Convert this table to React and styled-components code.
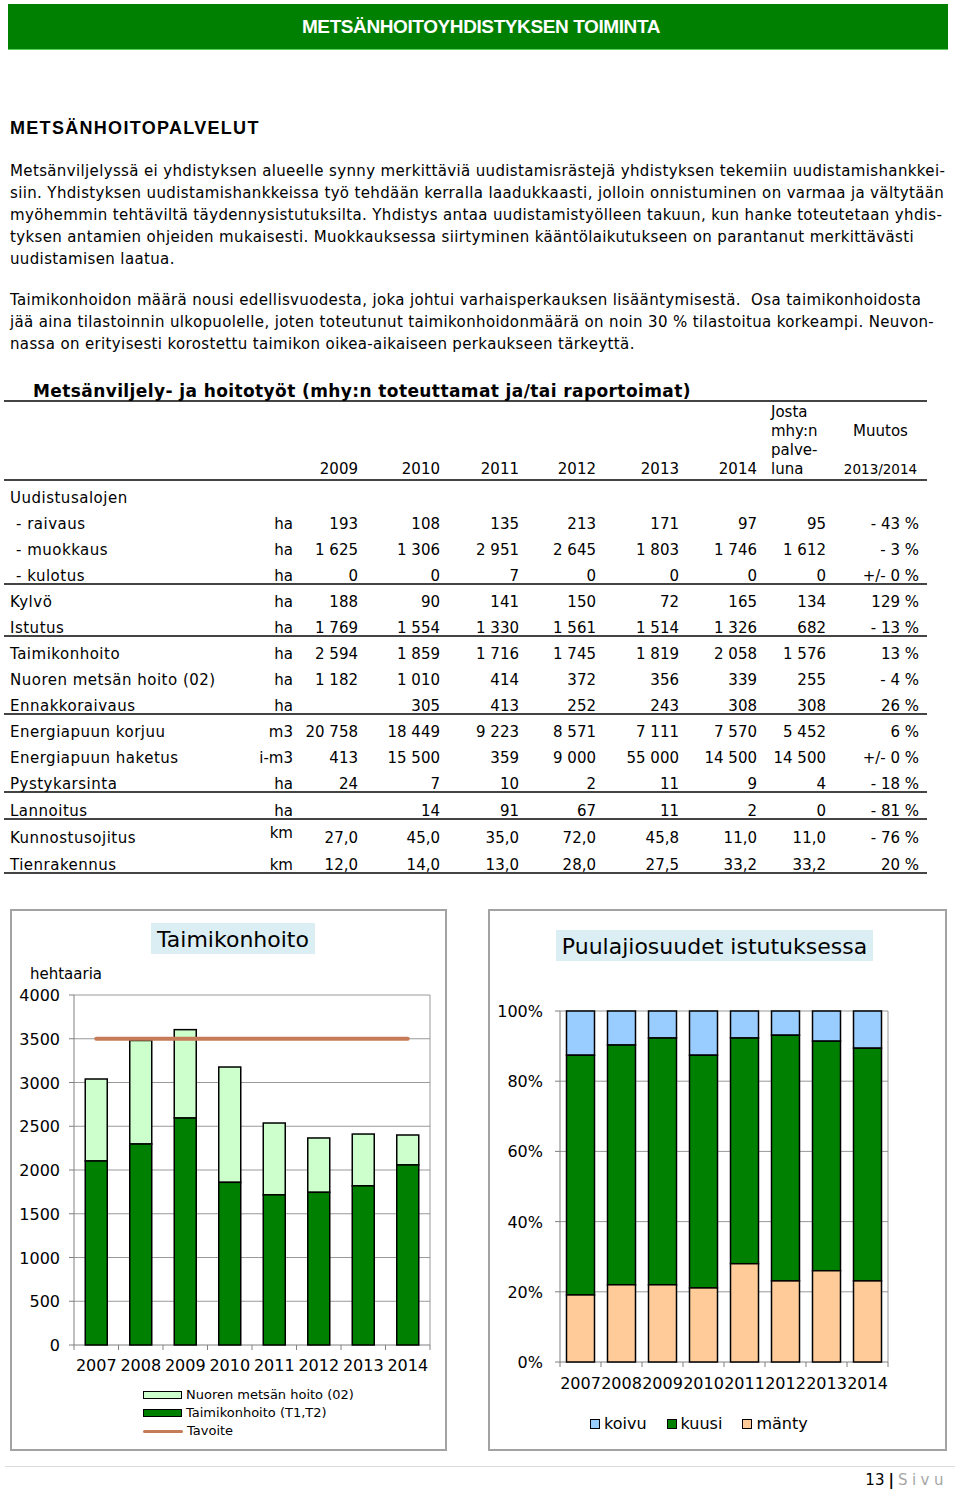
import React from "react";
import styled, { createGlobalStyle } from "styled-components";

const verdana = `"DejaVu Sans", Verdana, sans-serif`;
const darkGreen = "#008000";
const lightGreen = "#ccffcc";

const GlobalStyle = createGlobalStyle`
  body {
    margin: 0;
    background: #fff;
    font-family: ${verdana};
    color: #000;
  }
`;

const Page = styled.div`
  width: 960px;
  height: 1491px;
  padding-top: 4px;
  box-sizing: border-box;
  overflow: hidden;
`;

const HeaderBar = styled.div`
  margin: 0 12px 0 8px;
  height: 46px;
  background: ${darkGreen};
  border-bottom: 1px solid #5ccf5c;
  display: flex;
  align-items: center;
  justify-content: center;
  padding-left: 6px;
  box-sizing: border-box;
`;

const HeaderTitle = styled.h1`
  margin: 0;
  font-family: "Liberation Sans", Arial, sans-serif;
  font-weight: bold;
  font-size: 19px;
  letter-spacing: -0.4px;
  color: #fff;
`;

const SectionTitle = styled.h2`
  margin: 67px 0 0 10px;
  font-family: "Liberation Sans", Arial, sans-serif;
  font-weight: bold;
  font-size: 18px;
  line-height: 22px;
  letter-spacing: 1.3px;
`;

const Paragraph = styled.p`
  margin: ${(p) => p.gap}px 0 0 10px;
  font-size: 15px;
  line-height: 22px;
  letter-spacing: 0.36px;
  span {
    display: block;
    white-space: nowrap;
  }
`;

const TableTitle = styled.div`
  margin: 25px 33px 0 4px;
  padding: 3px 0 0 29px;
  font-weight: bold;
  font-size: 17px;
  line-height: 17px;
  letter-spacing: 0.4px;
  border-bottom: 2px solid #444;
`;

const DataTable = styled.table`
  margin-left: 4px;
  width: 923px;
  table-layout: fixed;
  border-collapse: collapse;
  font-size: 15px;
`;

const HeadCell = styled.th`
  height: 77px;
  padding: 0 ${(p) => (p.left ? 0 : 3)}px 0 ${(p) => (p.left ? 11 : p.center ? 8 : 0)}px;
  vertical-align: bottom;
  text-align: ${(p) => (p.left ? "left" : p.center ? "center" : "right")};
  font-weight: normal;
  line-height: 19px;
  border-bottom: 2px solid #444;
`;

const SmallHead = styled.div`
  font-size: 13.5px;
  margin-top: 19px;
`;

const Cell = styled.td`
  height: ${(p) => 26 + (p.extra || 0) - (p.line ? 2 : 0) - (p.raised ? 5 : 0)}px;
  padding: 0 ${(p) => p.pr ?? 3}px ${(p) => (p.raised ? 5 : 0)}px ${(p) => p.pl ?? 0}px;
  vertical-align: bottom;
  line-height: ${(p) => (p.line ? 14 : 18)}px;
  white-space: nowrap;
  text-align: ${(p) => (p.pl ? "left" : "right")};
  letter-spacing: ${(p) => (p.pl ? 0.5 : 0)}px;
  border-bottom: ${(p) => (p.line ? "2px solid #444" : "none")};
`;

const ChartsRow = styled.div`
  display: flex;
  gap: 41px;
  margin: 35px 0 0 10px;
`;

const ChartBox = styled.div`
  width: ${(p) => p.w}px;
  height: 542px;
  border: 2px solid #a3a3a3;
  box-sizing: border-box;
  display: flex;
  flex-direction: column;
`;

const ChartTitle = styled.div`
  align-self: center;
  margin: ${(p) => p.top}px 0 0 ${(p) => p.shift || 0}px;
  height: 31px;
  padding: 0 6px;
  background: #dbeef4;
  font-size: 22px;
  line-height: 33px;
`;

const Legend = styled.div`
  margin: 9px 0 0 131px;
  font-size: 13px;
  line-height: 18px;
`;

const LegendRow = styled.div`
  display: flex;
  align-items: center;
  gap: 4px;
`;

const BarSwatch = styled.span`
  width: 37px;
  height: 6px;
  border: 1.5px solid #000;
  background: ${(p) => p.color};
`;

const LineSwatch = styled.span`
  width: 40px;
  height: 3px;
  border-radius: 2px;
  background: #c57b57;
`;

const KeyRow = styled.div`
  display: flex;
  align-items: center;
  margin: 13px 0 0 100px;
  font-size: 16px;
  line-height: 20px;
`;

const KeyItem = styled.span`
  display: flex;
  align-items: center;
  margin-right: ${(p) => p.gap}px;
`;

const KeySquare = styled.span`
  width: 8px;
  height: 8px;
  border: 1px solid #000;
  margin-right: 4px;
  background: ${(p) => p.color};
`;

const Footer = styled.div`
  margin: 15px 5px 0 5px;
  border-top: 1px solid #dcdcdc;
  padding-top: 3px;
  text-align: right;
  padding-right: 7px;
  font-size: 15px;
  line-height: 20px;
`;

const Pipe = styled.span`
  font-weight: bold;
  margin: 0 4px;
`;

const Sivu = styled.span`
  color: #a6a6a6;
  letter-spacing: 4.5px;
`;

const years = ["2009", "2010", "2011", "2012", "2013", "2014"];
const colWidths = [251, 41, 65, 82, 79, 77, 83, 78, 69, 98];

const rows = [
  { label: "Uudistusalojen", unit: "", values: ["", "", "", "", "", "", ""], change: "" },
  { label: "- raivaus", sub: true, unit: "ha", values: ["193", "108", "135", "213", "171", "97", "95"], change: "- 43 %" },
  { label: "- muokkaus", sub: true, unit: "ha", values: ["1 625", "1 306", "2 951", "2 645", "1 803", "1 746", "1 612"], change: "- 3 %" },
  { label: "- kulotus", sub: true, unit: "ha", values: ["0", "0", "7", "0", "0", "0", "0"], change: "+/- 0 %", line: true },
  { label: "Kylvö", unit: "ha", values: ["188", "90", "141", "150", "72", "165", "134"], change: "129 %" },
  { label: "Istutus", unit: "ha", values: ["1 769", "1 554", "1 330", "1 561", "1 514", "1 326", "682"], change: "- 13 %", line: true },
  { label: "Taimikonhoito", unit: "ha", values: ["2 594", "1 859", "1 716", "1 745", "1 819", "2 058", "1 576"], change: "13 %" },
  { label: "Nuoren metsän hoito (02)", unit: "ha", values: ["1 182", "1 010", "414", "372", "356", "339", "255"], change: "- 4 %" },
  { label: "Ennakkoraivaus", unit: "ha", values: ["", "305", "413", "252", "243", "308", "308"], change: "26 %", line: true },
  { label: "Energiapuun korjuu", unit: "m3", values: ["20 758", "18 449", "9 223", "8 571", "7 111", "7 570", "5 452"], change: "6 %" },
  { label: "Energiapuun haketus", unit: "i-m3", values: ["413", "15 500", "359", "9 000", "55 000", "14 500", "14 500"], change: "+/- 0 %" },
  { label: "Pystykarsinta", unit: "ha", values: ["24", "7", "10", "2", "11", "9", "4"], change: "- 18 %", line: true },
  { label: "Lannoitus", unit: "ha", extra: 1, values: ["", "14", "91", "67", "11", "2", "0"], change: "- 81 %", line: true },
  { label: "Kunnostusojitus", unit: "km", extra: 1, raised: true, values: ["27,0", "45,0", "35,0", "72,0", "45,8", "11,0", "11,0"], change: "- 76 %" },
  { label: "Tienrakennus", unit: "km", extra: 1, values: ["12,0", "14,0", "13,0", "28,0", "27,5", "33,2", "33,2"], change: "20 %", line: true },
];

const chartYears = ["2007", "2008", "2009", "2010", "2011", "2012", "2013", "2014"];

// taimikonhoito (T1,T2) and total incl. nuoren metsän hoito
const careData = [
  [2103, 3040],
  [2297, 3480],
  [2594, 3604],
  [1859, 3177],
  [1716, 2537],
  [1745, 2366],
  [1819, 2411],
  [2058, 2400],
];

// kuusi top and mänty top, in percent
const speciesData = [
  [87.4, 19.1],
  [90.3, 22],
  [92.3, 22],
  [87.4, 21.1],
  [92.3, 28],
  [93.1, 23.1],
  [91.4, 26],
  [89.4, 23.1],
];

const CareChart = () => {
  const x0 = 62;
  const x1 = 418;
  const yBot = 388;
  const k = 0.0875;
  const y = (v) => yBot - v * k;
  const cw = (x1 - x0) / 8;
  const cx = (i) => x0 + cw / 2 + cw * i;
  const ticks = [0, 500, 1000, 1500, 2000, 2500, 3000, 3500, 4000];
  return (
    <svg width="433" height="420" style={{ display: "block", marginTop: 3 }}>
      <text x="18" y="22" fontSize="15" fontFamily={verdana}>hehtaaria</text>
      {ticks.map((t) => (
        <g key={t}>
          {t > 0 && <line x1={x0} x2={x1} y1={y(t)} y2={y(t)} stroke="#999" />}
          <line x1={x0 - 5} x2={x0} y1={y(t)} y2={y(t)} stroke="#808080" />
          <text x="48" y={y(t) + 6} fontSize="16" textAnchor="end" fontFamily={verdana}>{t}</text>
        </g>
      ))}
      <line x1={x1} x2={x1} y1={y(4000)} y2={yBot} stroke="#999" />
      <line x1={x0} x2={x0} y1={y(4000)} y2={yBot} stroke="#808080" />
      <line x1={x0} x2={x1} y1={yBot} y2={yBot} stroke="#808080" />
      {Array.from({ length: 9 }).map((_, i) => (
        <line key={i} x1={x0 + cw * i} x2={x0 + cw * i} y1={yBot} y2={yBot + 5} stroke="#808080" />
      ))}
      {careData.map(([dark, total], i) => (
        <g key={i}>
          <rect x={cx(i) - 11} y={y(total)} width="22" height={y(dark) - y(total)} fill={lightGreen} stroke="#000" strokeWidth="1.5" />
          <rect x={cx(i) - 11} y={y(dark)} width="22" height={yBot - y(dark)} fill={darkGreen} stroke="#000" strokeWidth="1.5" />
          <text x={cx(i)} y="414" fontSize="16" textAnchor="middle" fontFamily={verdana}>{chartYears[i]}</text>
        </g>
      ))}
      <line x1={cx(0)} x2={cx(7)} y1={y(3500)} y2={y(3500)} stroke="#c57b57" strokeWidth="4" strokeLinecap="round" />
    </svg>
  );
};

const SpeciesChart = () => {
  const x0 = 70;
  const x1 = 398;
  const yTop = 47;
  const yBot = 398;
  const y = (v) => yBot - (v * (yBot - yTop)) / 100;
  const cw = (x1 - x0) / 8;
  const cx = (i) => x0 + cw / 2 + cw * i;
  const ticks = [0, 20, 40, 60, 80, 100];
  return (
    <svg width="455" height="437" style={{ display: "block", marginTop: 3 }}>
      {ticks.map((t) => (
        <g key={t}>
          {t > 0 && <line x1={x0} x2={x1} y1={y(t)} y2={y(t)} stroke="#999" />}
          <line x1={x0 - 5} x2={x0} y1={y(t)} y2={y(t)} stroke="#808080" />
          <text x="53" y={y(t) + 6} fontSize="16" textAnchor="end" fontFamily={verdana}>{t}%</text>
        </g>
      ))}
      <line x1={x1} x2={x1} y1={yTop} y2={yBot} stroke="#999" />
      <line x1={x0} x2={x0} y1={yTop} y2={yBot} stroke="#808080" />
      <line x1={x0} x2={x1} y1={yBot} y2={yBot} stroke="#808080" />
      {Array.from({ length: 9 }).map((_, i) => (
        <line key={i} x1={x0 + cw * i} x2={x0 + cw * i} y1={yBot} y2={yBot + 5} stroke="#808080" />
      ))}
      {speciesData.map(([spruce, pine], i) => (
        <g key={i}>
          <rect x={cx(i) - 14} y={y(100)} width="28" height={y(spruce) - y(100)} fill="#99ccff" stroke="#000" strokeWidth="1.5" />
          <rect x={cx(i) - 14} y={y(spruce)} width="28" height={y(pine) - y(spruce)} fill={darkGreen} stroke="#000" strokeWidth="1.5" />
          <rect x={cx(i) - 14} y={y(pine)} width="28" height={yBot - y(pine)} fill="#ffcc99" stroke="#000" strokeWidth="1.5" />
          <text x={cx(i)} y="425" fontSize="16" textAnchor="middle" fontFamily={verdana}>{chartYears[i]}</text>
        </g>
      ))}
    </svg>
  );
};

const App = () => {
  return (
    <Page>
      <GlobalStyle />
      <HeaderBar>
        <HeaderTitle>METSÄNHOITOYHDISTYKSEN TOIMINTA</HeaderTitle>
      </HeaderBar>

      <SectionTitle>METSÄNHOITOPALVELUT</SectionTitle>

      <Paragraph gap={21}>
        <span>Metsänviljelyssä ei yhdistyksen alueelle synny merkittäviä uudistamisrästejä yhdistyksen tekemiin uudistamishankkei-</span>
        <span>siin. Yhdistyksen uudistamishankkeissa työ tehdään kerralla laadukkaasti, jolloin onnistuminen on varmaa ja vältytään</span>
        <span>myöhemmin tehtäviltä täydennysistutuksilta. Yhdistys antaa uudistamistyölleen takuun, kun hanke toteutetaan yhdis-</span>
        <span>tyksen antamien ohjeiden mukaisesti. Muokkauksessa siirtyminen kääntölaikutukseen on parantanut merkittävästi</span>
        <span>uudistamisen laatua.</span>
      </Paragraph>
      <Paragraph gap={19}>
        <span>Taimikonhoidon määrä nousi edellisvuodesta, joka johtui varhaisperkauksen lisääntymisestä.&nbsp; Osa taimikonhoidosta</span>
        <span>jää aina tilastoinnin ulkopuolelle, joten toteutunut taimikonhoidonmäärä on noin 30 % tilastoitua korkeampi. Neuvon-</span>
        <span>nassa on erityisesti korostettu taimikon oikea-aikaiseen perkaukseen tärkeyttä.</span>
      </Paragraph>

      <TableTitle>Metsänviljely- ja hoitotyöt (mhy:n toteuttamat ja/tai raportoimat)</TableTitle>
      <DataTable>
        <colgroup>
          {colWidths.map((w, i) => (
            <col key={i} style={{ width: w }} />
          ))}
        </colgroup>
        <thead>
          <tr>
            <HeadCell />
            <HeadCell />
            {years.map((yr) => (
              <HeadCell key={yr}>{yr}</HeadCell>
            ))}
            <HeadCell left>
              Josta
              <br />
              mhy:n
              <br />
              palve-
              <br />
              luna
            </HeadCell>
            <HeadCell center>
              Muutos
              <SmallHead>2013/2014</SmallHead>
            </HeadCell>
          </tr>
        </thead>
        <tbody>
          {rows.map((r) => (
            <tr key={r.label}>
              <Cell pl={r.sub ? 12 : 6} line={r.line} extra={r.extra}>{r.label}</Cell>
              <Cell line={r.line} raised={r.raised} extra={r.extra}>{r.unit}</Cell>
              {r.values.map((v, i) => (
                <Cell key={i} line={r.line} extra={r.extra}>{v}</Cell>
              ))}
              <Cell pr={8} line={r.line} extra={r.extra}>{r.change}</Cell>
            </tr>
          ))}
        </tbody>
      </DataTable>

      <ChartsRow>
        <ChartBox w={437}>
          <ChartTitle top={12} shift={9}>Taimikonhoito</ChartTitle>
          <CareChart />
          <Legend>
            <LegendRow>
              <BarSwatch color={lightGreen} />
              Nuoren metsän hoito (02)
            </LegendRow>
            <LegendRow>
              <BarSwatch color={darkGreen} />
              Taimikonhoito (T1,T2)
            </LegendRow>
            <LegendRow>
              <LineSwatch />
              Tavoite
            </LegendRow>
          </Legend>
        </ChartBox>
        <ChartBox w={459}>
          <ChartTitle top={19} shift={-6}>Puulajiosuudet istutuksessa</ChartTitle>
          <SpeciesChart />
          <KeyRow>
            <KeyItem gap={20}>
              <KeySquare color="#99ccff" />
              koivu
            </KeyItem>
            <KeyItem gap={20}>
              <KeySquare color={darkGreen} />
              kuusi
            </KeyItem>
            <KeyItem gap={0}>
              <KeySquare color="#ffcc99" />
              mänty
            </KeyItem>
          </KeyRow>
        </ChartBox>
      </ChartsRow>

      <Footer>
        13<Pipe>|</Pipe>
        <Sivu>Sivu</Sivu>
      </Footer>
    </Page>
  );
};

export default App;
